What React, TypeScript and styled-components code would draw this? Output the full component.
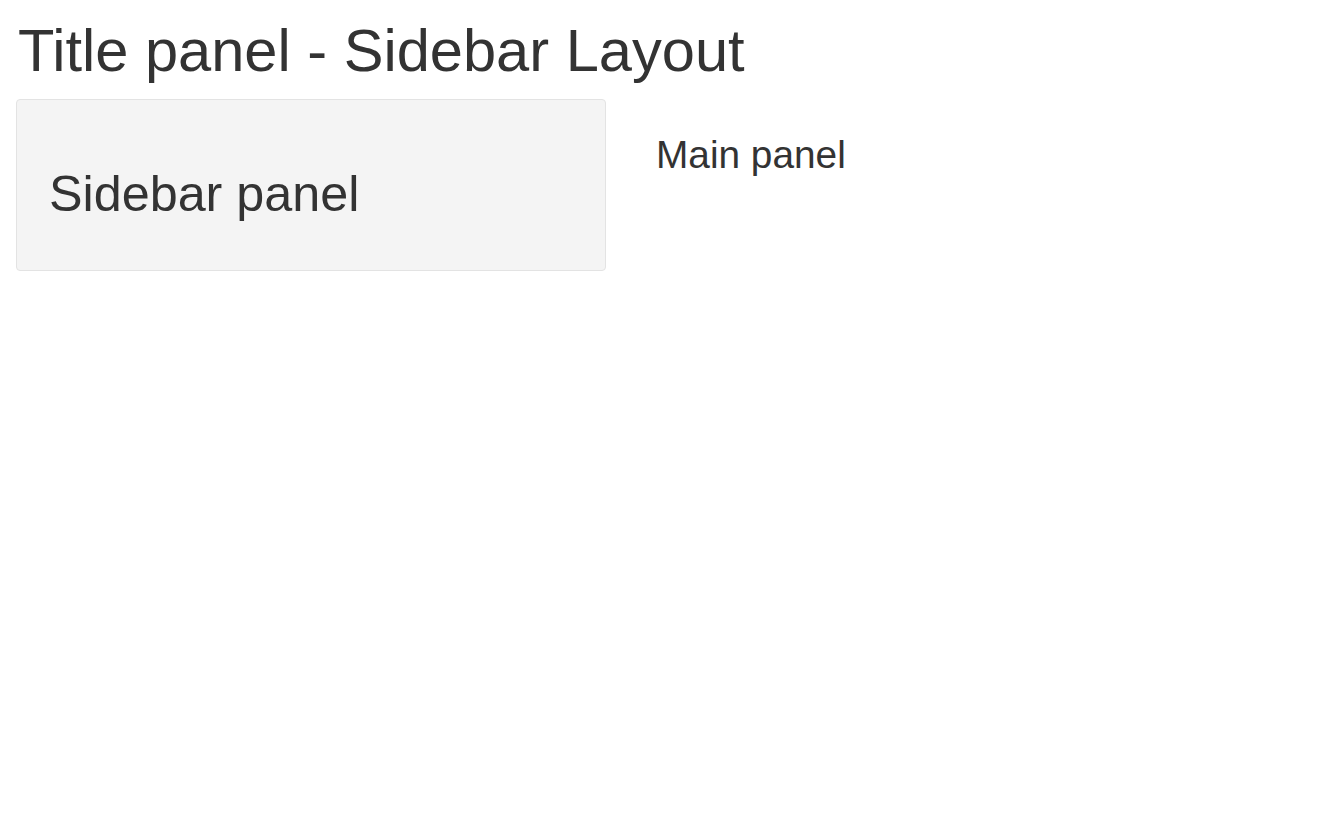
import React from "react";
import styled, { createGlobalStyle } from "styled-components";

const GlobalStyle = createGlobalStyle`
  html, body {
    margin: 0;
    padding: 0;
    background: #ffffff;
  }
  body {
    font-family: "Liberation Sans", Arial, Helvetica, sans-serif;
    color: #333333;
  }
`;

const Page = styled.div`
  padding: 0 16px;
`;

const Title = styled.h2`
  margin: 18px 0 16px;
  padding-left: 2px;
  font-size: 59.6px;
  line-height: 65px;
  font-weight: 400;
`;

const Layout = styled.div`
  display: flex;
  align-items: flex-start;
  gap: 50px;
`;

const Well = styled.div`
  box-sizing: border-box;
  width: 590px;
  height: 172px;
  padding: 66px 32px 49px;
  background: #f4f4f4;
  border: 1px solid #e3e3e3;
  border-radius: 4px;
  flex: none;
`;

const SidebarHeading = styled.h3`
  margin: 0;
  font-size: 50.3px;
  line-height: 55px;
  font-weight: 400;
`;

const Main = styled.div`
  padding-top: 35px;
  font-size: 38.8px;
  line-height: 42px;
`;

export default function App() {
  return (
    <>
      <GlobalStyle />
      <Page>
        <Title>Title panel - Sidebar Layout</Title>
        <Layout>
          <Well>
            <SidebarHeading>Sidebar panel</SidebarHeading>
          </Well>
          <Main>Main panel</Main>
        </Layout>
      </Page>
    </>
  );
}
